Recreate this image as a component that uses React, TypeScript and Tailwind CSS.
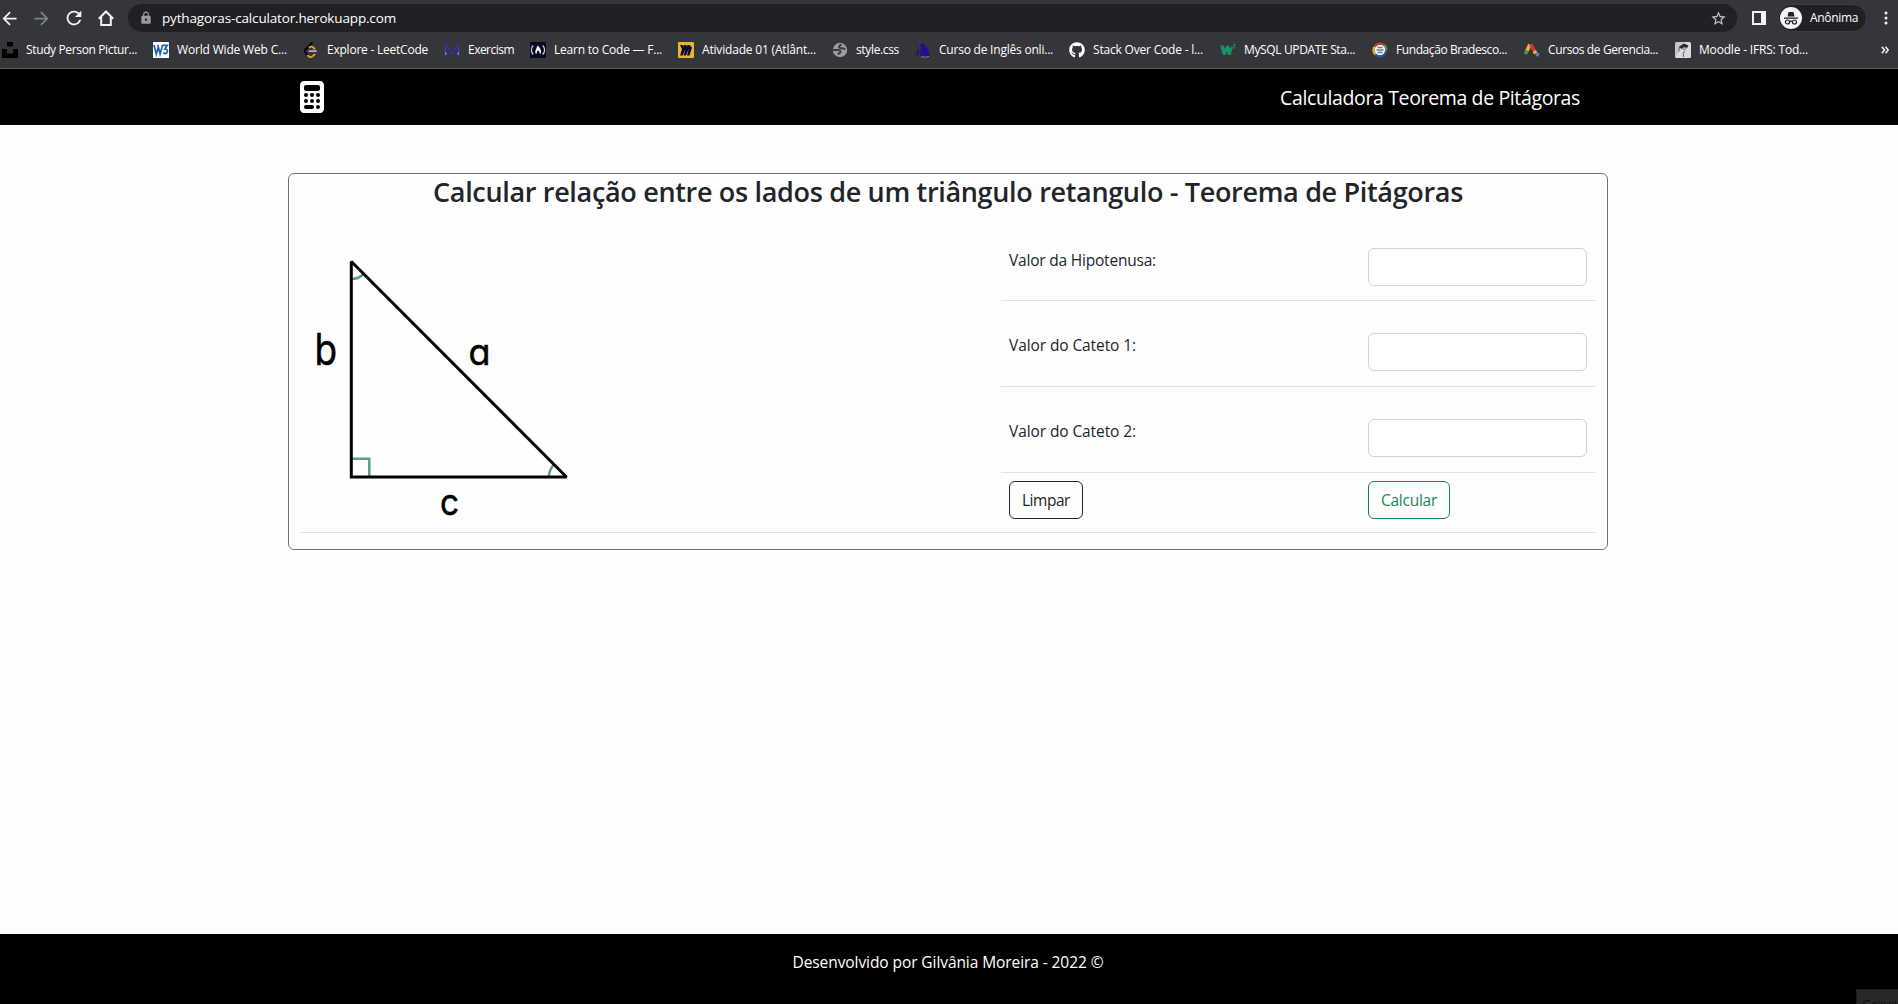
import { useLayoutEffect, useRef, useState, type ReactNode } from "react";
import { FaCalculator } from "react-icons/fa6";
import { FaGithub } from "react-icons/fa";
import { MdArrowBack, MdArrowForward, MdRefresh, MdLock, MdStarOutline } from "react-icons/md";

/** Single line of text whose tracking is adjusted to fill the given width. */
function Fit({ w, className = "", children }: { w: number; className?: string; children: string }) {
  const ref = useRef<HTMLSpanElement>(null);
  const [spacing, setSpacing] = useState(0);
  useLayoutEffect(() => {
    if (ref.current) {
      const natural = ref.current.getBoundingClientRect().width;
      setSpacing((w - natural) / children.length);
    }
  }, []);
  return (
    <span ref={ref} className={`inline-block whitespace-nowrap ${className}`} style={{ letterSpacing: `${spacing}px` }}>
      {children}
    </span>
  );
}

const svg = "block h-4 w-4 shrink-0";

const UnsplashIcon = () => (
  <svg className={svg} viewBox="0 0 16 16"><path fill="#000" d="M5 0h6v4.500H5zM0 7h5v4.500h6V7h5v9H0z" /></svg>
);
const W3Icon = () => (
  <svg className={svg} viewBox="0 0 16 16">
    <rect width="16" height="16" rx="0.500" fill="#fff" />
    <g fill="none" stroke="#1b62ad" strokeWidth="1.700">
      <path d="M1 3l2.300 9L5.500 4.500M4.800 3l2.300 9L9.600 3" />
      <path d="M9.500 3.300h4.700L11.800 7c2.200-.2 3 1.300 2.600 2.800-.5 2-3 2.400-4.300.7" />
    </g>
  </svg>
);
const LeetIcon = () => (
  <svg className={svg} viewBox="0 0 16 16" fill="none" strokeWidth="1.800" strokeLinecap="round">
    <path stroke="#050505" d="M9 1L2.500 7.500c-1 1-1 2.300 0 3.300L5 13.500" />
    <path stroke="#e8a127" d="M5 13.700c1.500 1.600 3.500 1.600 4.800.4l1.700-1.600M6.500 5.300c1.300-1 2.600-.8 3.700.2l1.300 1.300" />
    <path stroke="#b3b3b3" d="M6.500 9.200h6.500" />
  </svg>
);
const ExercismIcon = () => (
  <svg className={svg} viewBox="0 0 16 16" fill="none" stroke="#3a2fc5" strokeWidth="1.500">
    <path d="M4 1.500C2 1.500 2 2.500 2 4.500S1.500 7.500.3 8C1.500 8.500 2 9.500 2 11.500s0 3 2 3M12 1.500c2 0 2 1 2 3s.5 3 1.700 3.500C14.500 8.500 14 9.500 14 11.500s0 3-2 3M4 7.500q1-1.500 2 0M10 7.500q1-1.500 2 0M6.300 10q1.700 1.800 3.400 0" />
    <path stroke="#9cc0e8" strokeWidth="1.200" d="M1.700 10.500v2M14.300 10.500v2" />
  </svg>
);
const CampIcon = () => (
  <svg className={svg} viewBox="0 0 16 16">
    <rect width="16" height="16" fill="#0a0a23" />
    <path fill="none" stroke="#d5d5dc" strokeWidth="1.200" d="M3.200 3.500C.8 6 .8 10 3.200 12.500M12.800 3.500c2.400 2.500 2.400 6.500 0 9" />
    <path fill="#f1f1f4" d="M7.500 3.500c2.500 2 4 4.500 3.500 8H9.500C9.800 9.500 9 9 8 8.500c-1 .8-1.300 1.500-1 3H5.500C4.500 8.500 6.800 6.500 7.500 3.500z" />
  </svg>
);
const MiroIcon = () => (
  <svg className={svg} viewBox="0 0 16 16">
    <rect width="16" height="16" rx="1" fill="#e8b731" />
    <path fill="#08083a" d="M2 3h2.500L6 5.500 5.500 3H8l1.500 2L9 3h2.500L14 5.500 11.500 13.500H9L10.800 6.500 8 13.500H5.700L7.500 6.500 4.700 13.500H2.200L4 7z" />
  </svg>
);
const GlobeIcon = () => (
  <svg className={svg} viewBox="0 0 16 16">
    <circle cx="8" cy="8" r="7.200" fill="#9b9ba5" />
    <path fill="none" stroke="#393a3e" strokeWidth="2" d="M9.500 2.500C8 3 6.300 4.500 7.500 5.700S12 5.500 13 7.500M1 8h4.500c1.500 0 3.300.5 3 2-.3 1.300-1.800 1-2.500 2.500" />
  </svg>
);
const SailIcon = () => (
  <svg className={svg} viewBox="0 0 16 16">
    <path fill="#20108c" d="M5 .5C9.500 1.500 14.500 7 15 14l-5 .8-5.300-1.500C6 9 6.300 4 5 .5zM4 4.500V13L.5 13.500C1.700 10 3.200 8 4 4.500z" />
    <path stroke="#9d9db5" strokeWidth="0.700" d="M6 14.800l4 .4 4-.8M5 0v1" fill="none" />
  </svg>
);
const GitIcon = () => <FaGithub className="block h-4 w-4 shrink-0 text-white" />;
const SchoolsIcon = () => (
  <svg className={svg} viewBox="0 0 16 16">
    <path fill="#149562" d="M0 3.500h3.500l1.500 3.500L6.200 3.500h2.600l1.500 3.500L11 4.500h2L10.700 13H8.200L6.800 9.500 5.500 13H3z" />
    <path fill="none" stroke="#149562" d="M13 2.700h2.200L14 4.200c2 0 1.300 2.300-1 1.800" />
  </svg>
);
const BradescoIcon = () => (
  <svg className={svg} viewBox="0 0 16 16" fill="none" strokeWidth="2.200">
    <circle cx="8" cy="8" r="5.500" fill="#f4f4f8" stroke="none" />
    <path stroke="#c8402d" d="M2.800 4.500A6.300 6.300 0 0111.500 2.700" />
    <path stroke="#4d9c4b" d="M11.500 2.700a6.300 6.300 0 012.700 6" />
    <path stroke="#e1b52e" d="M3.500 12.500A6.300 6.300 0 012.500 4.800" />
    <path stroke="#2553aa" d="M14.200 8.500a6.300 6.300 0 01-10.700 4" />
    <path stroke="#6773a5" strokeWidth="1.300" d="M4.500 8h7M5.500 5.500h5M5.500 10.500h5" />
  </svg>
);
const AdsIcon = () => (
  <svg className={svg} viewBox="0 0 16 16" fill="none" strokeWidth="3.600">
    <path stroke="#42985a" d="M3.200 7.500L1.500 12" />
    <path stroke="#e7b63b" d="M5.800 2.500L3.200 8.500" />
    <path stroke="#c83f32" d="M6.500 2l5 9" />
    <path stroke="#e7b63b" d="M10.300 9l1.500 2.500" />
    <path stroke="#4d83d1" d="M12 12l3 1" />
  </svg>
);
const MoodleIcon = () => (
  <svg className={svg} viewBox="0 0 16 16">
    <rect width="16" height="16" rx="1.500" fill="#d9dbdc" />
    <path fill="#8c8f91" d="M0 16L10 0H2Q0 0 0 2z" opacity=".25" />
    <path fill="#2b2b2b" d="M3.500 5L9 1.500l4.500 2L12 6l-3-.8-2.500 1.500z" />
    <path fill="none" stroke="#666" strokeWidth="1" d="M4 5.500v4M7 6.500q2 2 4.500 0M9.500 9q-2 3-1 6" />
  </svg>
);

const bookmarks: { icon: () => ReactNode; label: string; w: number; box: string }[] = [
  { icon: UnsplashIcon, label: "Study Person Pictur...", w: 111, box: "w-[151px]" },
  { icon: W3Icon, label: "World Wide Web C...", w: 110, box: "w-[150px]" },
  { icon: LeetIcon, label: "Explore - LeetCode", w: 101, box: "w-[141px]" },
  { icon: ExercismIcon, label: "Exercism", w: 46, box: "w-[86px]" },
  { icon: CampIcon, label: "Learn to Code — F...", w: 108, box: "w-[148px]" },
  { icon: MiroIcon, label: "Atividade 01 (Atlânt...", w: 114, box: "w-[154px]" },
  { icon: GlobeIcon, label: "style.css", w: 43, box: "w-[83px]" },
  { icon: SailIcon, label: "Curso de Inglês onli...", w: 114, box: "w-[154px]" },
  { icon: GitIcon, label: "Stack Over Code - l...", w: 110, box: "w-[151px]" },
  { icon: SchoolsIcon, label: "MySQL UPDATE Sta...", w: 111, box: "w-[152px]" },
  { icon: BradescoIcon, label: "Fundação Bradesco...", w: 111, box: "w-[152px]" },
  { icon: AdsIcon, label: "Cursos de Gerencia...", w: 110, box: "w-[151px]" },
  { icon: MoodleIcon, label: "Moodle - IFRS: Tod...", w: 109, box: "w-[151px]" },
];

function BrowserBar() {
  return (
    <div className="h-[69px] shrink-0 border-b border-[#5f6063] bg-[#35363a] pt-1 text-white">
      <div className="flex h-7 items-center">
        <MdArrowBack className="-ml-px h-[21px] w-[21px] shrink-0 text-[#f1f3f4]" />
        <MdArrowForward className="ml-[11px] h-[21px] w-[21px] shrink-0 text-[#7c8486]" />
        <MdRefresh className="ml-[11px] h-[22px] w-[22px] shrink-0 text-[#f1f3f4]" />
        <svg className="ml-[13px] h-4 w-4 shrink-0" viewBox="0 0 16 16" fill="none" stroke="#f1f3f4" strokeWidth="2">
          <path d="M.8 8.800L8 1.500l7.200 7.300M3.200 7v8h9.600V7" />
        </svg>
        <div className="ml-3.5 flex h-7 w-[1609px] shrink-0 items-center rounded-full bg-[#202124] pr-2.5 pl-[11px]">
          <MdLock className="h-3.5 w-3.5 text-[#9b9ba5]" />
          <Fit w={234} className="ml-[9px] pt-px text-[13.500px]">pythagoras-calculator.herokuapp.com</Fit>
          <MdStarOutline className="ml-auto h-[17px] w-[17px] text-[#c9cbce]" />
        </div>
        <div className="ml-[15px] h-3.5 w-3.5 shrink-0 border-2 border-r-[5px] border-[#f1f3f4]" />
        <div className="ml-3 flex h-7 w-[89px] shrink-0 items-center rounded-full border border-[#3c3d41] bg-[#202124] pl-px">
          <svg className="h-[22px] w-[22px] shrink-0" viewBox="0 0 22 22">
            <circle cx="11" cy="11" r="11" fill="#f1f3f4" />
            <path fill="#202124" d="M7.500 9.500l1-4.500h5l1 4.500zM4 10.500h14v1.200H4z" />
            <g fill="none" stroke="#202124" strokeWidth="1.200">
              <circle cx="7.500" cy="15" r="2" /><circle cx="14.500" cy="15" r="2" /><path d="M9.500 14.600q1.500-.8 3 0" />
            </g>
          </svg>
          <Fit w={48} className="ml-2 text-[12px]">Anônima</Fit>
        </div>
        <svg className="ml-[17px] h-4 w-1 shrink-0" viewBox="0 0 4 16" fill="#f1f3f4">
          <circle cx="2" cy="3" r="1.500" /><circle cx="2" cy="8" r="1.500" /><circle cx="2" cy="13" r="1.500" />
        </svg>
      </div>
      <div className="flex h-9 items-center pl-0.5 text-[12px]">
        {bookmarks.map(({ icon: Icon, label, w, box }) => (
          <div key={label} className={`flex shrink-0 items-center gap-2 ${box}`}>
            <Icon />
            <Fit w={w}>{label}</Fit>
          </div>
        ))}
        <svg className="ml-[55px] h-2 w-2 shrink-0" viewBox="0 0 8 8" fill="none" stroke="#f1f3f4" strokeWidth="1.500">
          <path d="M.8.8L3.600 4 .8 7.200M4.500.8L7.300 4 4.500 7.200" />
        </svg>
      </div>
    </div>
  );
}

function Triangle() {
  return (
    <svg className="block h-[300px] w-[300px]" viewBox="301 236 300 300">
      <g fill="none" stroke="#5b9f7c" strokeWidth="2.500">
        <path d="M352 458.700h17.300V476" />
        <path d="M352 279q6.500 0 11.500-5M549 476q.3-6.500 5-11.500" />
      </g>
      <path d="M351.300 261.500V477H566.500z" fill="none" stroke="#000" strokeWidth="3" strokeMiterlimit="2" />
      <g fill="#000" stroke="#000" strokeWidth="0.500" className="font-['Inter'] [font-feature-settings:'cv11']">
        <text transform="translate(314.500 364.500) scale(.9 1.080)" fontSize="41">b</text>
        <text transform="translate(468.500 364.500) scale(.97 1)" fontSize="37">a</text>
        <text transform="translate(440 514.500) scale(.9 1)" fontSize="37">c</text>
      </g>
    </svg>
  );
}

function Field({ label, w, height }: { label: string; w: number; height: string }) {
  return (
    <div className={`flex items-start justify-between border-b border-[#dee2e6] px-2 pt-8 ${height}`}>
      <label className="leading-6"><Fit w={w}>{label}</Fit></label>
      <input className="h-[38px] w-[219px] rounded-md border border-[#ced4da] bg-white px-3" />
    </div>
  );
}

export default function App() {
  return (
    <div className="relative flex h-[1004px] w-[1898px] flex-col overflow-hidden bg-[#fefefe] font-['Open_Sans',sans-serif] text-[15.500px] text-[#212529]">
      <BrowserBar />
      <header className="h-14 shrink-0 bg-black text-white">
        <div className="ml-[288px] flex h-14 w-[1320px] items-center justify-between pr-7 pl-3">
          <FaCalculator className="h-8 w-6" />
          <Fit w={300} className="pt-0.5 text-[19.500px]">Calculadora Teorema de Pitágoras</Fit>
        </div>
      </header>
      <main className="flex-1 pt-12">
        <section className="ml-[288px] h-[377px] w-[1320px] rounded-md border border-[#6c757d] px-3">
          <h1 className="mb-[7px] pt-px text-center text-[27px] leading-[34px] font-semibold"><Fit w={1030}>Calcular relação entre os lados de um triângulo retangulo - Teorema de Pitágoras</Fit></h1>
          <div className="flex h-[317px] border-b border-[#dee2e6]">
            <div className="w-[700px] pt-5"><Triangle /></div>
            <form className="flex-1">
              <Field label="Valor da Hipotenusa:" w={147} height="h-[85px]" />
              <Field label="Valor do Cateto 1:" w={127} height="h-[86px]" />
              <Field label="Valor do Cateto 2:" w={127} height="h-[86px]" />
              <div className="flex px-2 pt-2">
                <button type="button" className="h-[38px] w-[74px] rounded-md border border-[#212529] pt-0.5"><Fit w={48}>Limpar</Fit></button>
                <button type="button" className="ml-[285px] h-[38px] w-[82px] rounded-md border border-[#198754] pt-0.5 text-[#198754]"><Fit w={56}>Calcular</Fit></button>
              </div>
            </form>
          </div>
        </section>
      </main>
      <footer className="h-[70px] shrink-0 bg-black pt-4 pr-0.5 text-center leading-6 text-white">
        <Fit w={311}>Desenvolvido por Gilvânia Moreira - 2022 ©</Fit>
      </footer>
      <div className="absolute right-0 bottom-0 h-[15px] w-[42px] overflow-hidden border-t border-l border-[#1c1c1e] bg-[#28282a] pt-[5px] pl-[5px] text-[13px] text-[#0c0c0c]">Gravar</div>
    </div>
  );
}
